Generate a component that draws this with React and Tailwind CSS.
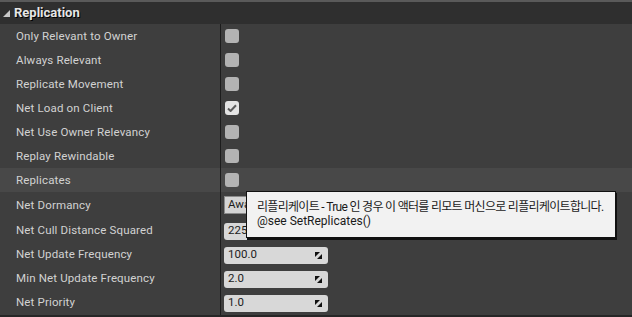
import React from 'react';

const font = { fontFamily: 'Roboto, "Noto Sans CJK KR", sans-serif' };

const ResizeIcon = () => (
  <svg width="7" height="7" viewBox="0 0 7 7" className="shrink-0">
    <polygon points="0,0 5,0 0,5" fill="#111" />
    <polygon points="7,2 7,7 2,7" fill="#111" />
  </svg>
);

const Checkbox = ({ checked }) => (
  <div
    className={`flex h-[14px] w-[14px] items-center justify-center rounded-[3px] ${
      checked ? 'bg-[#e4e4e4]' : 'bg-[#b3b3b3]'
    }`}
  >
    {checked && (
      <svg width="10" height="8" viewBox="0 0 10 8">
        <path d="M1 4.5 L3.6 7 L9 1.2" stroke="#5c5c5c" strokeWidth="2" fill="none" />
      </svg>
    )}
  </div>
);

const NumberBox = ({ value }) => (
  <div className="flex h-[17px] w-[104px] items-center justify-between rounded-[3px] bg-[#d8d8d8] pl-[4px] pr-[6px] text-[11.5px] text-[#1c1c1c]">
    <span>{value}</span>
    <ResizeIcon />
  </div>
);

const rows = [
  { label: 'Only Relevant to Owner', type: 'check' },
  { label: 'Always Relevant', type: 'check' },
  { label: 'Replicate Movement', type: 'check' },
  { label: 'Net Load on Client', type: 'check', checked: true },
  { label: 'Net Use Owner Relevancy', type: 'check' },
  { label: 'Replay Rewindable', type: 'check' },
  { label: 'Replicates', type: 'check', hover: true },
  { label: 'Net Dormancy', type: 'combo', value: 'Awake' },
  { label: 'Net Cull Distance Squared', type: 'number', value: '2250000.0' },
  { label: 'Net Update Frequency', type: 'number', value: '100.0' },
  { label: 'Min Net Update Frequency', type: 'number', value: '2.0' },
  { label: 'Net Priority', type: 'number', value: '1.0' },
];

export default function App() {
  return (
    <div className="relative h-[317px] w-[632px] overflow-hidden bg-[#3e3e3e]" style={font}>
      <div className="h-[2px] bg-[#5a5a5a]" />
      {/* Category header */}
      <div className="flex h-[22px] items-center bg-[#2f2f2f] pl-[3px]">
        <svg width="8" height="8" viewBox="0 0 8 8" className="mr-[3px] mt-[1px]">
          <polygon points="7,0 7,7 0,7" fill="#c8c8c8" />
        </svg>
        <span className="text-[13px] font-bold text-[#e6e6e6] [text-shadow:1px_1px_0_#000]">Replication</span>
      </div>

      {rows.map((row) => (
        <div
          key={row.label}
          className={`flex ${row.type === 'combo' ? 'h-[26px]' : 'h-[24px]'} ${row.hover ? 'bg-[#484848]' : ''}`}
        >
          <div className="flex w-[220px] items-center pl-[16px] pt-[2px] text-[11.5px] tracking-[0.15px] text-[#d2d2d2]">
            {row.label}
          </div>
          <div className="w-px bg-[#1c1c1c]" />
          <div className={`flex flex-1 items-center pl-[3px] ${row.type === 'number' ? 'pt-[2px]' : ''}`}>
            {row.type === 'check' && (
              <div className="pl-[1px]">
                <Checkbox checked={row.checked} />
              </div>
            )}
            {row.type === 'combo' && (
              <div className="flex h-[18px] w-[80px] items-center border border-[#8a8a8a] bg-[#d4d4d4] px-[3px] text-[11.5px] text-[#1c1c1c]">
                {row.value}
              </div>
            )}
            {row.type === 'number' && <NumberBox value={row.value} />}
          </div>
        </div>
      ))}
      <div className="flex h-px">
        <div className="w-[220px]" />
        <div className="w-px bg-[#1c1c1c]" />
      </div>
      <div className="h-[2px] bg-[#262626]" />

      {/* Tooltip */}
      <div className="absolute left-[246px] top-[191px] h-[47px] w-[370px] whitespace-nowrap border border-[#111] bg-[#f2f2f2] pl-[10px] pt-[9px] text-[12px] leading-[13px] text-[#1a1a1a] shadow-[1px_2px_0_#111]">
        <div className="tracking-[-0.7px]">리플리케이트 - True 인 경우 이 액터를 리모트 머신으로 리플리케이트합니다.</div>
        <div className="mt-px">@see SetReplicates()</div>
      </div>
    </div>
  );
}
